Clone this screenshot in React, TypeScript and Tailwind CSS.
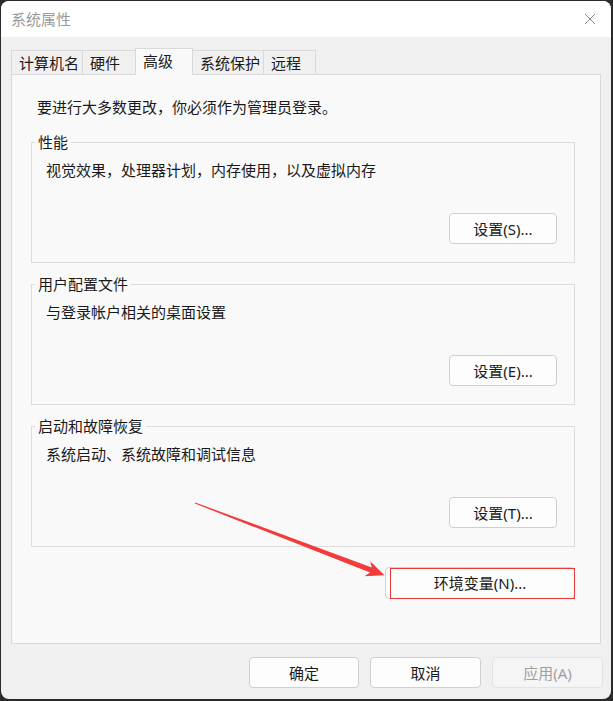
import React from 'react'

const font = "font-['Noto_Sans','Noto_Sans_CJK_SC',sans-serif]"

const tabs = [
  { label: '计算机名', w: 'w-[72px]' },
  { label: '硬件', w: 'w-[54px]' },
  { label: '高级', w: 'w-[58px]', active: true },
  { label: '系统保护', w: 'w-[72px]' },
  { label: '远程', w: 'w-[53px]' },
]

function Btn({ children, className = '', disabled = false }: { children: React.ReactNode; className?: string; disabled?: boolean }) {
  return (
    <button
      className={
        'flex items-center justify-center rounded-[4px] border text-[15px] leading-5 ' +
        (disabled
          ? 'border-[#e3e3e3] bg-[#f5f5f5] text-[#a0a0a0] '
          : 'border-[#d0d0d0] bg-[#fdfdfd] text-[#1a1a1a] ') +
        className
      }
    >
      {children}
    </button>
  )
}

function Group({ title, text, button, className = '' }: { title: string; text: string; button: string; className?: string }) {
  return (
    <fieldset className={'border border-[#dcdcdc] pl-[14px] pr-[17px] pb-[18px] ' + className}>
      {/* legend sits inside the padding, pull it back toward the border */}
      <legend className="-ml-[11px] px-[3px] text-[15px] leading-5 text-[#1a1a1a]">{title}</legend>
      <div className="mt-[8px] text-[15px] leading-5 text-[#1a1a1a]">{text}</div>
      <div className="mt-[33px] flex justify-end">
        <Btn className="h-[31px] w-[108px]">{button}</Btn>
      </div>
    </fieldset>
  )
}

export default function App() {
  return (
    <div className={'relative h-[701px] w-[613px] overflow-hidden bg-[#2b2b2b] pl-px pt-px ' + font}>
      {/* window */}
      <div className="flex h-[698px] w-[610px] flex-col overflow-hidden rounded-[8px] bg-[#f0f0f0]">
        {/* title bar */}
        <div className="flex h-[36px] shrink-0 items-center justify-between bg-white pl-[10px] pr-[14px]">
          <span className="text-[15px] leading-5 text-[#9a9a9a]">系统属性</span>
          <svg width="12" height="12" viewBox="0 0 12 12" className="mr-[1px]">
            <path d="M1 1L11 11M11 1L1 11" stroke="#8a8a8a" strokeWidth="1" fill="none" />
          </svg>
        </div>

        <div className="pl-[10px] pr-[10px] pt-[11px]">
          {/* tabs */}
          <div className="relative z-10 flex h-[27px] items-end">
            {tabs.map((t, i) => (
              <div
                key={t.label}
                className={
                  'flex items-center border-l border-r border-t border-[#d9d9d9] pl-[7px] text-[15px] leading-5 text-[#1a1a1a] ' +
                  t.w +
                  (i > 0 ? ' -ml-px' : '') +
                  (t.active
                    ? ' relative z-10 h-[27px] bg-[#f9f9f9] pb-[2px]'
                    : ' mb-px h-[24px] bg-[#f0f0f0]')
                }
              >
                {t.label}
              </div>
            ))}
          </div>

          {/* panel */}
          <div className="-mt-px h-[570px] border border-[#d9d9d9] bg-[#f9f9f9] pl-[19px] pr-[25px] pt-[22px]">
            <div className="pl-[6px] text-[15px] leading-5 text-[#1a1a1a]">要进行大多数更改，你必须作为管理员登录。</div>

            <Group className="mt-[15px]" title="性能" text="视觉效果，处理器计划，内存使用，以及虚拟内存" button="设置(S)..." />
            <Group className="mt-[11px]" title="用户配置文件" text="与登录帐户相关的桌面设置" button="设置(E)..." />
            <Group className="mt-[11px]" title="启动和故障恢复" text="系统启动、系统故障和调试信息" button="设置(T)..." />

            <div className="mt-[20px] flex justify-end">
              <div className="relative">
                <Btn className="h-[32px] w-[190px]">环境变量(N)...</Btn>
                {/* red annotation box */}
                <div className="pointer-events-none absolute bottom-0 left-[5px] right-0 top-px border-[1.5px] border-[#e8393b]" />
              </div>
            </div>
          </div>

          {/* bottom buttons */}
          <div className="-mr-[2px] mt-[13px] flex justify-end gap-[11px]">
            <Btn className="h-[31px] w-[110px]">确定</Btn>
            <Btn className="h-[31px] w-[111px]">取消</Btn>
            <Btn disabled className="h-[31px] w-[111px]">应用(A)</Btn>
          </div>
        </div>
      </div>

      {/* red arrow annotation */}
      <svg className="pointer-events-none absolute left-0 top-0" width="613" height="701" viewBox="0 0 613 701">
        <polygon
          points="194.8,503.5 370.0,572.6 364.5,576.2 384.5,575.2 370.2,561.2 371.8,567.4 195.2,502.5"
          fill="#f23b3b"
        />
      </svg>
    </div>
  )
}
